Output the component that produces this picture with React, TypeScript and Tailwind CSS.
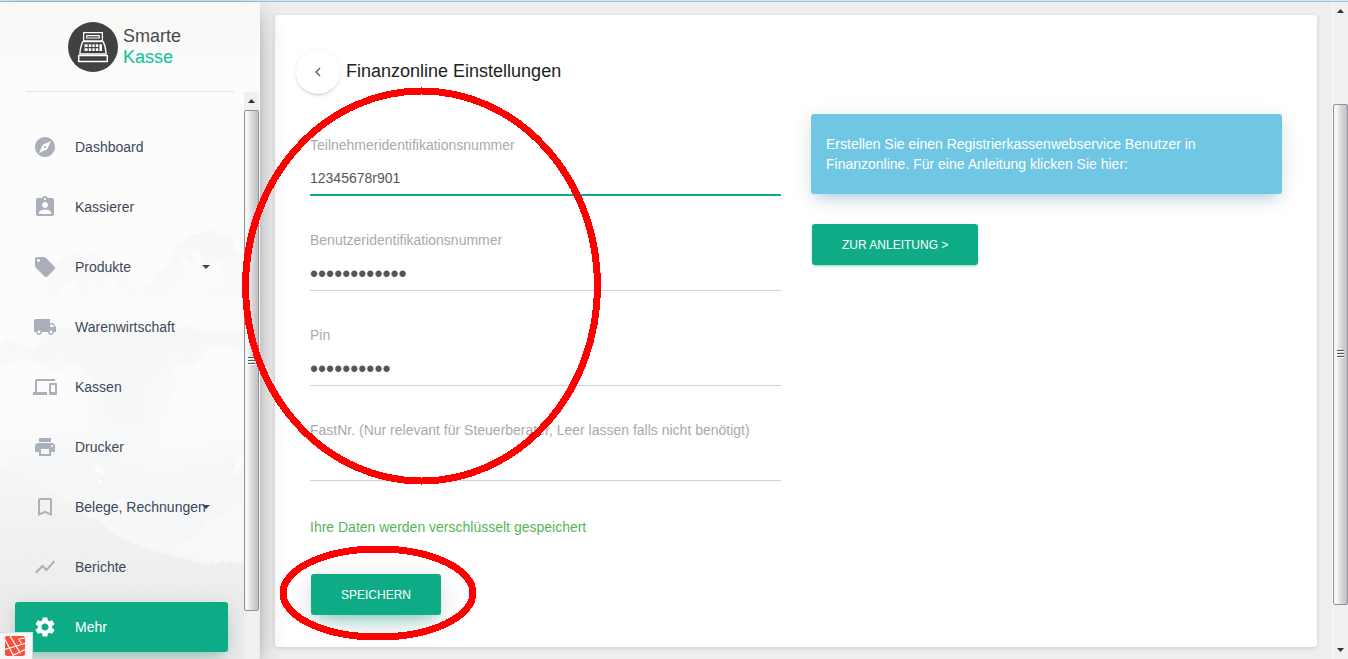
import type { ReactNode } from "react";
import type { IconType } from "react-icons";
import {
  MdAssignmentInd,
  MdBookmarkBorder,
  MdDevices,
  MdExplore,
  MdKeyboardArrowLeft,
  MdLocalOffer,
  MdLocalShipping,
  MdPrint,
  MdSettings,
  MdShowChart,
} from "react-icons/md";

type NavEntry = { label: string; icon: IconType; menu?: boolean; active?: boolean };

const entries: NavEntry[] = [
  { label: "Dashboard", icon: MdExplore },
  { label: "Kassierer", icon: MdAssignmentInd },
  { label: "Produkte", icon: MdLocalOffer, menu: true },
  { label: "Warenwirtschaft", icon: MdLocalShipping },
  { label: "Kassen", icon: MdDevices },
  { label: "Drucker", icon: MdPrint },
  { label: "Belege, Rechnungen", icon: MdBookmarkBorder, menu: true },
  { label: "Berichte", icon: MdShowChart },
  { label: "Mehr", icon: MdSettings, active: true },
];

function LogoMark() {
  return (
    <svg viewBox="0 0 50 50" className="size-[50px] shrink-0" aria-hidden="true">
      <circle cx="25" cy="25" r="25" fill="#414141" />
      <g fill="none" stroke="#fff" strokeLinejoin="round">
        <path strokeWidth="1.3" d="M15.600 10.600h18.800v8.400h-18.800z" />
        <path strokeWidth="1.1" d="M18.700 13.600h12.600v2.400h-12.600z" />
        <path strokeWidth="1.3" d="M14.800 19.600h20.400c1.500 3 2.600 7.500 3 12.400H11.800c.4-4.900 1.500-9.400 3-12.400z" />
        <path strokeWidth="1.5" d="M10.700 33.400h28.600v6H10.700z" />
      </g>
      <path fill="#fff" d="M16.500 22.300h17.500v6.700H16.500z" />
      <path
        d="M16.500 25.600h14M20.200 22v7.500M23.800 22v7.500M27.200 22v7.500M30.800 22v7.500"
        stroke="#414141"
        strokeWidth="1.1"
      />
    </svg>
  );
}

function Landscape() {
  return (
    <svg
      viewBox="0 0 260 657"
      preserveAspectRatio="none"
      className="absolute inset-0 size-full"
      aria-hidden="true"
    >
      <defs>
        <linearGradient id="sky" x1="0" y1="0" x2="0" y2="1">
          <stop offset="0" stopColor="#f8f8f7" />
          <stop offset="0.15" stopColor="#fcfcfc" />
          <stop offset="0.6" stopColor="#fcfcfc" />
          <stop offset="1" stopColor="#f5f5f5" />
        </linearGradient>
        <linearGradient id="peak" x1="0" y1="0" x2="0" y2="1">
          <stop offset="0" stopColor="#f7f7f7" />
          <stop offset="1" stopColor="#fcfcfc" />
        </linearGradient>
        <linearGradient id="ridge" x1="0" y1="0" x2="0" y2="1">
          <stop offset="0" stopColor="#f6f7f8" />
          <stop offset="1" stopColor="#fbfbfb" />
        </linearGradient>
        <linearGradient id="wood" x1="0" y1="0" x2="0" y2="1">
          <stop offset="0" stopColor="#f6f6f4" />
          <stop offset="0.4" stopColor="#f0f0ef" />
          <stop offset="0.7" stopColor="#ebebeb" />
          <stop offset="1" stopColor="#ebebeb" />
        </linearGradient>
        <filter id="rough" colorInterpolationFilters="sRGB">
          <feTurbulence type="fractalNoise" baseFrequency="0.04" numOctaves="4" seed="3" result="n" />
          <feDisplacementMap in="SourceGraphic" in2="n" scale="16" result="d" />
          <feGaussianBlur in="d" stdDeviation="0.6" />
        </filter>
        <filter id="haze" colorInterpolationFilters="sRGB">
          <feGaussianBlur stdDeviation="12" />
        </filter>
        <filter id="forest" colorInterpolationFilters="sRGB">
          <feTurbulence type="fractalNoise" baseFrequency="0.3 0.06" numOctaves="3" seed="8" result="n" />
          <feDisplacementMap in="SourceGraphic" in2="n" scale="9" />
        </filter>
      </defs>
      <path fill="url(#sky)" d="M0 0h260v657H0z" />
      <g filter="url(#rough)">
        <path
          fill="url(#peak)"
          d="M0 330 30 302 45 278 62 262 76 251 84 255 95 250 108 262 124 268 140 290 152 280 166 256 186 236 206 231 232 232 236 250 262 262V330z"
        />
        <path
          fill="#fcfcfc"
          d="M66 266 60 284 74 276 80 298 92 272 104 296 108 272 120 288 132 290 112 306 70 302 40 312 56 292zM178 250 190 262 198 244 206 272 220 256 228 280 200 286 172 296 182 272z"
        />
        <path
          fill="url(#ridge)"
          d="M0 345 36 340 62 326 98 330 130 322 160 330 190 326 262 332V350L214 346 176 372 150 440 120 450 104 400 80 362 60 372 30 356 0 366z"
        />
      </g>
      <g filter="url(#haze)">
        <path fill="#f5f6f8" d="M-20 462 60 445 100 452 160 472 280 444V558L170 546 90 510-20 480z" />
        <path fill="#f6f7f9" d="M92 350h50l10 80-50 10z" />
      </g>
      <g filter="url(#rough)">
        <path fill="#f9f9f7" d="M170 547 262 496V570z" />
        <path fill="#fcfcfc" d="M98 464l8 2-2 8-6-2zM98 478l6 2-3 3zM112 506l12-12-2 9-10 7zM230 466l14-14v10l-14 12z" />
      </g>
      <path
        filter="url(#forest)"
        fill="url(#wood)"
        d="M-20 462 8 466 20 472 34 478 46 488 60 494 72 502 86 514 98 518 112 530 130 540 150 548 168 552 190 559 208 562 226 560 260 558 280 556V680H-20z"
      />
    </svg>
  );
}

function Grip() {
  return (
    <span className="flex flex-col gap-px" aria-hidden="true">
      <span className="h-[2px] w-[7px] border-b border-white bg-[#555]" />
      <span className="h-[2px] w-[7px] border-b border-white bg-[#555]" />
      <span className="h-[2px] w-[7px] border-b border-white bg-[#555]" />
    </span>
  );
}

function Thumb({ className }: { className: string }) {
  return (
    <div
      className={`flex items-center justify-center rounded-[2px] border border-[#8f9296] bg-linear-to-r from-[#f6f6f6] from-20% via-[#dcdcde] via-50% to-[#c0c0c5] ${className}`}
    >
      <Grip />
    </div>
  );
}

function Arrow({ down = false }: { down?: boolean }) {
  return (
    <span className="flex h-[18px] shrink-0 items-center justify-center" aria-hidden="true">
      <svg viewBox="0 0 7 4" className="h-[4px] w-[7px]">
        <path d={down ? "M0 0h7L3.500 4z" : "M0 4h7L3.500 0z"} fill="#333" />
      </svg>
    </span>
  );
}

function NavItem({ label, icon: Icon, menu, active }: NavEntry) {
  return (
    <li>
      <a
        href="#"
        className={`relative flex h-[50px] items-center rounded-[3px] px-[15px] text-[14px] leading-[30px] ${
          active
            ? "bg-[#0eac86] text-white shadow-[0_12px_20px_-10px_rgba(14,172,134,0.28),0_4px_20px_0_rgba(0,0,0,0.12),0_7px_8px_-5px_rgba(14,172,134,0.2)]"
            : "text-[#3c4858]"
        }`}
      >
        <span className="mr-[15px] flex w-[30px] justify-center">
          <Icon className={`size-6 ${active ? "text-white" : "text-[#a9afbb]"}`} aria-hidden="true" />
        </span>
        <span className="whitespace-nowrap">{label}</span>
        {menu && (
          <span
            className="absolute right-[18px] size-0 border-x-4 border-t-4 border-x-transparent border-t-[#3c4858]"
            aria-hidden="true"
          />
        )}
      </a>
    </li>
  );
}

function Sidebar() {
  return (
    <aside className="relative z-10 flex w-[260px] shrink-0 flex-col bg-white shadow-[0_10px_30px_-12px_rgba(0,0,0,0.42),0_4px_25px_0_rgba(0,0,0,0.12),0_8px_10px_-5px_rgba(0,0,0,0.2)]">
      <Landscape />
      <a href="#" className="relative flex h-[89px] shrink-0 items-center gap-[5px] pl-[68px]">
        <LogoMark />
        <span className="text-[18px] leading-[21px] text-[#4a4a4c]">
          Smarte
          <br />
          <span className="text-[#0cc09c]">Kasse</span>
        </span>
      </a>
      <div className="relative mr-[26px] ml-[26px] h-px shrink-0 bg-[#e2e2e2]" />
      <div className="relative flex min-h-0 flex-1">
        <nav className="min-w-0 flex-1 overflow-hidden pt-[30px] pr-4 pl-[15px]">
          <ul className="flex flex-col gap-[10px]">
            {entries.map((e) => (
              <NavItem key={e.label} {...e} />
            ))}
          </ul>
        </nav>
        <div className="mr-px flex w-[15px] flex-col bg-[#f0f0f0]">
          <Arrow />
          <Thumb className="flex-[501]" />
          <div className="flex-[48]" />
        </div>
      </div>
    </aside>
  );
}

type FieldProps = { id: string; label: string; type?: string; value?: string; focused?: boolean };

function Field({ id, label, type = "text", value, focused }: FieldProps) {
  return (
    <div className="flex flex-col">
      <label htmlFor={id} className="text-[14px] leading-5 whitespace-nowrap text-[#aaa]">
        {label}
      </label>
      <input
        id={id}
        type={type}
        defaultValue={value}
        className={`mt-1 h-[37px] w-full bg-transparent text-[#555] outline-none ${
          type === "password" ? "pt-1 text-[23px]" : "pt-[2px] text-[14px]"
        } ${focused ? "border-b-2 border-[#0eac86]" : "border-b border-[#d2d2d2]"}`}
      />
    </div>
  );
}

function ActionButton({ children, raised }: { children: ReactNode; raised?: boolean }) {
  return (
    <button
      type="button"
      className={`mx-px h-[41px] rounded-[3px] bg-[#0eac86] px-[30px] pt-px text-[12px] leading-[18px] text-white uppercase ${
        raised
          ? "shadow-[0_14px_26px_-12px_rgba(14,172,134,0.42),0_4px_23px_0_rgba(0,0,0,0.12),0_8px_10px_-5px_rgba(14,172,134,0.2)]"
          : "shadow-[0_2px_2px_0_rgba(14,172,134,0.14),0_3px_1px_-2px_rgba(14,172,134,0.2),0_1px_5px_0_rgba(14,172,134,0.12)]"
      }`}
    >
      {children}
    </button>
  );
}

function Settings() {
  return (
    <section className="rounded-[4px] bg-white px-[35px] pt-[35px] pb-8 shadow-[0_1px_4px_0_rgba(0,0,0,0.14)]">
      <header className="-ml-[14px] flex items-center gap-[6px]">
        <button
          type="button"
          aria-label="Zurück"
          className="flex size-11 items-center justify-center rounded-full bg-white text-[#666] shadow-[0_2px_2px_0_rgba(153,153,153,0.14),0_3px_1px_-2px_rgba(153,153,153,0.2),0_1px_5px_0_rgba(153,153,153,0.2)]"
        >
          <MdKeyboardArrowLeft className="size-[18px]" />
        </button>
        <h1 className="pb-[2px] text-[18px] leading-6 text-[#222]">Finanzonline Einstellungen</h1>
      </header>
      <div className="mt-5 grid grid-cols-2 gap-[30px]">
        <form className="flex flex-col pt-[21px]">
          <div className="flex flex-col gap-[34px]">
            <Field id="tid" label="Teilnehmeridentifikationsnummer" value="12345678r901" focused />
            <Field id="benid" label="Benutzeridentifikationsnummer" type="password" value="123456789012" />
            <Field id="pin" label="Pin" type="password" value="1234567890" />
            <Field id="fastnr" label="FastNr. (Nur relevant für Steuerberater, Leer lassen falls nicht benötigt)" />
          </div>
          <p className="mt-9 text-[14px] leading-5 text-[#55b559]">Ihre Daten werden verschlüsselt gespeichert</p>
          <div className="mt-[37px]">
            <ActionButton raised>Speichern</ActionButton>
          </div>
        </form>
        <div>
          <p className="rounded-[3px] bg-[#70c7e3] px-[15px] py-5 text-[14px] leading-5 text-white shadow-[0_12px_20px_-10px_rgba(91,192,222,0.28),0_4px_20px_0_rgba(0,0,0,0.12),0_7px_8px_-5px_rgba(91,192,222,0.2)]">
            Erstellen Sie einen Registrierkassenwebservice Benutzer in Finanzonline. Für eine Anleitung klicken Sie
            hier:
          </p>
          <div className="mt-[30px]">
            <ActionButton>Zur Anleitung &gt;</ActionButton>
          </div>
        </div>
      </div>
    </section>
  );
}

function DebugBadge() {
  return (
    <button
      type="button"
      aria-label="Debugbar"
      className="absolute bottom-0 left-0 z-20 flex h-[27px] w-[33px] items-center border-t border-r border-[#ddd] bg-[#f7f7f7] pl-[5px]"
    >
      <svg viewBox="0 0 20 20" className="size-5" aria-hidden="true">
        <rect width="20" height="20" rx="2" fill="#fb503b" />
        <path
          d="M0 3.500 4.500 12 13 9.500M4.500 12l4 8M0 13.500 4.500 12M5 0l10.500 17.500M13 9.500l7-2M13.500 3l6.500-1M13.500 3l3 4.500M7.500 19.500 20 13.500"
          fill="none"
          stroke="#fff"
          strokeWidth="1.200"
        />
      </svg>
    </button>
  );
}

function Markings() {
  return (
    <svg
      className="pointer-events-none absolute top-0 left-0 z-30 h-[659px] w-[640px]"
      viewBox="0 0 640 659"
      fill="none"
      stroke="#f00"
      strokeWidth="7"
      shapeRendering="crispEdges"
      aria-hidden="true"
    >
      <ellipse cx="421.500" cy="286" rx="176" ry="195" />
      <ellipse cx="378" cy="593" rx="95" ry="44" />
    </svg>
  );
}

export default function App() {
  return (
    <div className="relative flex h-screen flex-col overflow-hidden bg-[#eee] font-['Liberation_Sans',Arial,sans-serif]">
      <div className="h-[2px] shrink-0 border-b border-[#a3bcd3] bg-[#d9e8f7]" />
      <div className="flex min-h-0 flex-1">
        <Sidebar />
        <main className="min-w-0 flex-1 overflow-hidden px-[15px] pt-[13px]">
          <Settings />
        </main>
        <div className="flex w-4 flex-col border-l border-[#fafafa] bg-[#f0f0f0]">
          <Arrow />
          <div className="flex-[84]" />
          <Thumb className="flex-[501]" />
          <div className="flex-[36]" />
          <Arrow down />
        </div>
      </div>
      <DebugBadge />
      <Markings />
    </div>
  );
}
